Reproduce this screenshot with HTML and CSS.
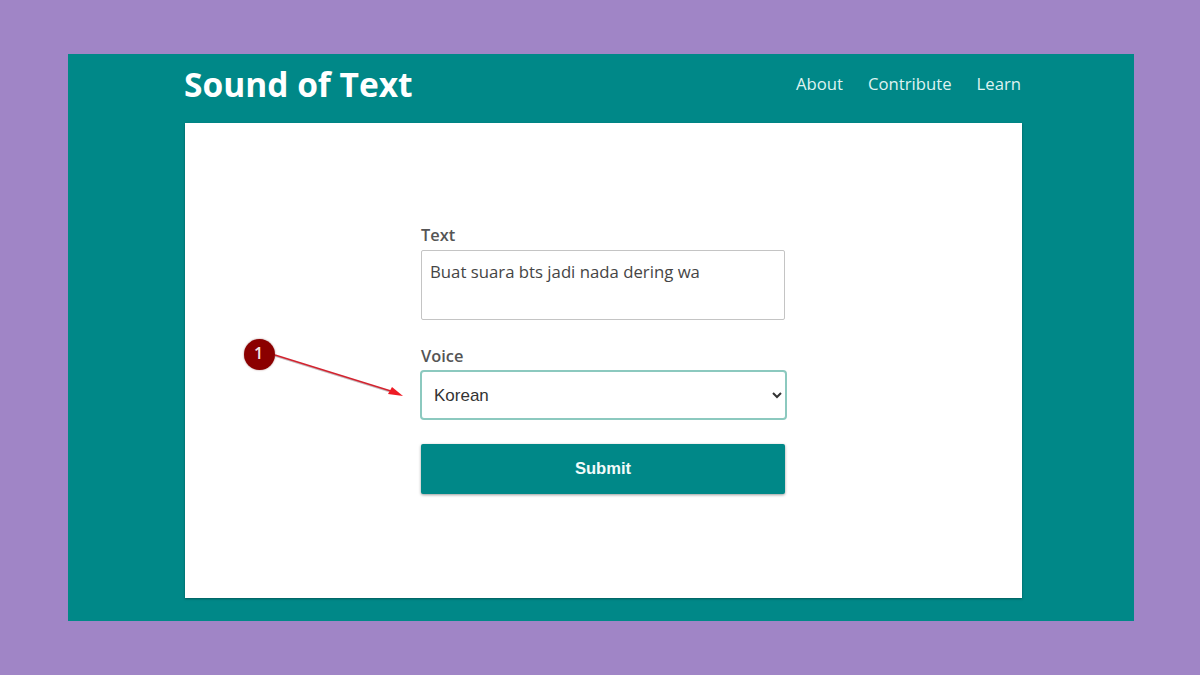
FILE: index.html
```html
<!DOCTYPE html>
<html lang="en">
<head>
<meta charset="utf-8">
<title>Sound of Text</title>
<link rel="stylesheet" href="styles.css">
</head>
<body>
<div class="frame">
  <header class="header">
    <h1 class="brand">Sound of Text</h1>
    <nav class="nav">
      <a class="nav-link" href="#">About</a>
      <a class="nav-link" href="#">Contribute</a>
      <a class="nav-link" href="#">Learn</a>
    </nav>
  </header>
  <main class="card">
    <form class="form">
      <label class="label" for="text">Text</label>
      <textarea class="textarea" id="text">Buat suara bts jadi nada dering wa</textarea>
      <label class="label label-voice" for="voice">Voice</label>
      <select class="select" id="voice">
        <option>Korean</option>
      </select>
      <button class="submit" type="button">Submit</button>
    </form>
    <svg class="arrow" width="140" height="60" viewBox="0 0 140 60" aria-hidden="true">
      <path class="arrow-shadow" d="M3 4 L122 41"/>
      <path class="arrow-line" d="M3 3 L122 40"/>
      <path class="arrow-head" d="M131 44 L120 35 L116 42 Z"/>
    </svg>
    <span class="badge">1</span>
  </main>
</div>
</body>
</html>
```
FILE: styles.css
```css
* {
  box-sizing: border-box;
}

html,
body {
  margin: 0;
  height: 100%;
}

body {
  background: #a085c6;
  padding: 54px 66px 54px 68px;
  font-family: "Open Sans", "Noto Sans", sans-serif;
  overflow: hidden;
}

.frame {
  height: 567px;
  background: #008888;
  padding: 0 112px 0 117px;
  display: flex;
  flex-direction: column;
}

.header {
  height: 69px;
  flex: none;
  display: flex;
  align-items: center;
  justify-content: space-between;
  padding-bottom: 10px;
}

.brand {
  margin: 0 0 0 -1px;
  font-size: 33.5px;
  font-weight: 700;
  line-height: 40px;
  color: #ffffff;
}

.nav {
  display: flex;
  gap: 25px;
  margin-right: 1px;
}

.nav-link {
  font-size: 16.7px;
  line-height: 22px;
  color: #dff3f1;
  text-decoration: none;
}

.card {
  position: relative;
  width: 837px;
  height: 475px;
  background: #ffffff;
  box-shadow: 0 1px 2px rgba(0, 60, 60, 0.6);
  display: flex;
  justify-content: center;
}

.form {
  width: 364px;
  margin-right: 1px;
  padding-top: 101px;
  display: flex;
  flex-direction: column;
  align-items: stretch;
}

.label {
  font-size: 16.4px;
  font-weight: 600;
  line-height: 22px;
  color: #555555;
  margin-bottom: 4px;
}

.label-voice {
  margin-top: 25px;
  margin-bottom: 3px;
}

.textarea {
  height: 70px;
  border: 1px solid #c4c4c4;
  border-radius: 2px;
  padding: 9px 8px;
  font-family: "Open Sans", "Noto Sans", sans-serif;
  font-size: 16.75px;
  line-height: 24px;
  color: #454545;
  resize: none;
  outline: none;
}

.select {
  height: 50px;
  margin: 0 -2px 0 -1px;
  border: 2px solid #8cc9bf;
  border-radius: 4px;
  background: #ffffff;
  padding: 0 6px 0 8px;
  font-family: "Liberation Sans", Arial, sans-serif;
  font-size: 17px;
  color: #333333;
  outline: none;
}

.submit {
  height: 50px;
  margin-top: 24px;
  border: 0;
  border-radius: 2px;
  background: #008888;
  box-shadow: 0 1px 3px rgba(0, 0, 0, 0.4);
  font-family: "Liberation Sans", Arial, sans-serif;
  font-size: 16.6px;
  font-weight: 700;
  color: #f2fbfa;
}

.badge {
  position: absolute;
  left: 59px;
  top: 216px;
  width: 31px;
  height: 31px;
  border-radius: 50%;
  background: #8b0000;
  color: #f5e6e6;
  font-size: 16px;
  font-weight: 600;
  line-height: 29px;
  text-align: center;
  padding-right: 2px;
  box-shadow: 0 0 2px rgba(90, 0, 0, 0.5);
}

.arrow {
  position: absolute;
  left: 87px;
  top: 229px;
}

.arrow-line {
  fill: none;
  stroke: #d3232f;
  stroke-width: 1.6;
}

.arrow-shadow {
  fill: none;
  stroke: rgba(90, 60, 70, 0.35);
  stroke-width: 1.5;
}

.arrow-head {
  fill: #ee1c25;
}
```
